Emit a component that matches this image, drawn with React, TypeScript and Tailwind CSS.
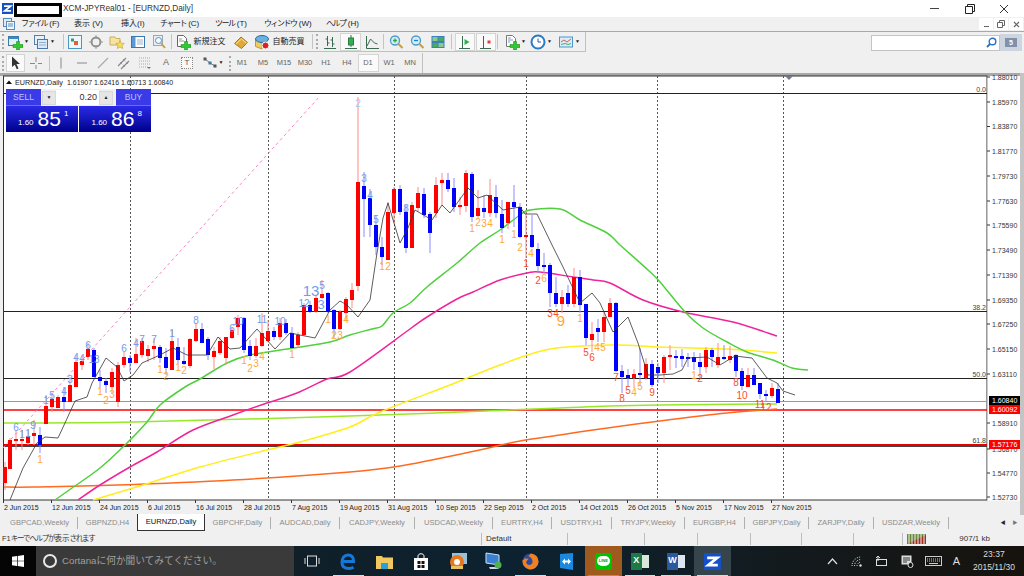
import React from 'react';

// [x, bodyTop, bodyBottom, wickTop, wickBottom, color]
type Candle = [number, number, number, number, number, 'r' | 'b'];

const candles: Candle[] = [
  [5, 467, 483, 462, 490, 'r'], [10, 440, 469, 438, 469, 'r'], [16, 439, 441, 430, 450, 'r'], [22, 439, 441, 430, 450, 'r'],
  [28, 436, 443, 430, 445, 'r'], [34, 433, 436, 420, 445, 'r'], [40, 435, 445, 427, 453, 'b'], [46, 406, 424, 395, 424, 'r'],
  [52, 399, 407, 393, 412, 'r'], [58, 397, 408, 395, 408, 'r'], [64, 397, 402, 387, 412, 'b'], [70, 385, 402, 377, 402, 'r'],
  [76, 362, 387, 355, 387, 'r'], [82, 361, 365, 355, 370, 'r'], [88, 349, 357, 343, 360, 'r'], [94, 350, 377, 348, 377, 'b'],
  [100, 377, 381, 370, 387, 'b'], [106, 381, 385, 378, 393, 'b'], [112, 372, 387, 368, 393, 'r'], [118, 365, 402, 362, 407, 'r'],
  [124, 357, 365, 352, 368, 'r'], [130, 358, 363, 355, 372, 'b'], [136, 354, 363, 338, 363, 'r'], [142, 341, 355, 338, 358, 'r'],
  [148, 349, 356, 345, 362, 'r'], [154, 346, 349, 338, 360, 'r'], [160, 347, 358, 345, 363, 'b'], [166, 357, 368, 348, 375, 'b'],
  [172, 341, 370, 330, 370, 'r'], [178, 347, 360, 338, 363, 'b'], [184, 361, 364, 347, 365, 'b'], [190, 339, 366, 338, 368, 'r'],
  [196, 329, 341, 323, 342, 'r'], [202, 329, 343, 323, 343, 'b'], [208, 339, 355, 337, 360, 'b'], [214, 351, 357, 347, 369, 'r'],
  [220, 341, 353, 337, 355, 'r'], [226, 337, 358, 337, 365, 'r'], [232, 330, 338, 327, 339, 'r'], [238, 318, 327, 315, 335, 'r'],
  [244, 318, 350, 317, 353, 'b'], [250, 346, 356, 340, 360, 'b'], [256, 346, 356, 338, 358, 'r'], [262, 333, 346, 313, 347, 'r'],
  [268, 331, 341, 320, 342, 'r'], [274, 331, 337, 327, 340, 'b'], [280, 323, 337, 318, 340, 'r'], [286, 323, 333, 319, 335, 'b'],
  [292, 333, 348, 327, 348, 'b'], [298, 335, 345, 332, 347, 'r'], [304, 305, 335, 303, 336, 'r'], [310, 305, 312, 301, 313, 'b'],
  [316, 298, 312, 295, 313, 'r'], [322, 294, 298, 280, 299, 'r'], [328, 293, 312, 292, 313, 'b'], [334, 310, 329, 309, 338, 'b'],
  [340, 312, 329, 310, 330, 'r'], [346, 299, 313, 297, 320, 'r'], [352, 290, 300, 283, 308, 'r'], [358, 182, 286, 97, 291, 'r'],
  [364, 186, 199, 172, 237, 'b'], [370, 198, 225, 189, 237, 'b'], [376, 225, 247, 215, 255, 'b'], [382, 247, 257, 237, 265, 'b'],
  [388, 212, 260, 202, 260, 'r'], [394, 189, 213, 187, 223, 'r'], [400, 189, 212, 185, 215, 'b'], [406, 212, 248, 205, 253, 'b'],
  [412, 205, 248, 202, 248, 'r'], [418, 193, 208, 187, 212, 'r'], [424, 194, 215, 188, 218, 'b'], [430, 214, 233, 212, 253, 'b'],
  [436, 185, 213, 177, 218, 'r'], [442, 180, 183, 173, 205, 'r'], [448, 180, 189, 173, 192, 'b'], [454, 188, 207, 178, 212, 'b'],
  [460, 205, 207, 197, 215, 'r'], [466, 173, 206, 170, 212, 'r'], [472, 174, 217, 172, 222, 'b'], [478, 208, 216, 190, 218, 'r'],
  [484, 208, 212, 195, 218, 'b'], [490, 195, 213, 179, 217, 'r'], [496, 197, 213, 185, 218, 'b'], [502, 214, 228, 200, 233, 'b'],
  [508, 202, 223, 202, 229, 'r'], [514, 202, 207, 185, 227, 'b'], [520, 207, 237, 203, 238, 'b'], [526, 235, 237, 212, 258, 'r'],
  [532, 235, 247, 215, 248, 'b'], [538, 249, 266, 243, 273, 'b'], [544, 265, 266, 253, 273, 'b'], [550, 265, 293, 263, 307, 'b'],
  [556, 293, 304, 277, 307, 'b'], [562, 297, 304, 290, 313, 'r'], [568, 293, 304, 285, 307, 'b'], [574, 277, 304, 268, 307, 'r'],
  [580, 277, 305, 270, 313, 'b'], [586, 304, 338, 304, 345, 'b'], [592, 334, 340, 322, 352, 'r'], [598, 328, 332, 319, 342, 'b'],
  [604, 317, 332, 312, 342, 'r'], [610, 303, 317, 298, 317, 'r'], [616, 303, 371, 302, 372, 'b'], [622, 371, 377, 365, 393, 'b'],
  [628, 375, 378, 369, 387, 'b'], [634, 374, 378, 369, 388, 'r'], [640, 373, 375, 348, 385, 'b'], [646, 364, 378, 358, 380, 'r'],
  [652, 364, 385, 360, 387, 'b'], [658, 367, 373, 363, 383, 'b'], [664, 357, 373, 355, 383, 'r'], [670, 355, 357, 345, 370, 'r'],
  [676, 356, 357, 350, 368, 'b'], [682, 356, 359, 349, 367, 'b'], [688, 357, 359, 353, 367, 'b'], [694, 357, 362, 352, 370, 'b'],
  [700, 362, 367, 353, 378, 'b'], [706, 350, 367, 347, 373, 'r'], [712, 350, 357, 348, 367, 'b'], [718, 357, 365, 343, 368, 'r'],
  [724, 357, 359, 345, 360, 'b'], [730, 356, 360, 346, 363, 'r'], [736, 355, 371, 354, 377, 'b'], [742, 371, 386, 368, 390, 'b'],
  [748, 375, 387, 368, 387, 'r'], [754, 375, 385, 368, 385, 'b'], [760, 383, 394, 383, 399, 'b'], [766, 394, 396, 390, 402, 'b'],
  [772, 388, 396, 383, 398, 'r'], [778, 389, 403, 383, 403, 'b'],
];

const blackMa = '10,500 23,468 37,443 45,437 58,438 65,423 75,401 87,397 92,383 106,358 117,367 124,381 133,375 142,363 160,355 173,348 187,355 207,355 218,337 230,349 240,348 257,329 275,349 290,333 315,338 330,310 340,301 347,305 358,317 370,300 377,253 383,218 388,203 400,243 408,228 415,210 432,220 442,205 450,213 468,188 478,198 487,195 503,210 520,207 525,214 537,214 553,247 563,267 580,303 592,293 600,303 613,332 628,317 638,343 648,375 660,375 673,374 682,370 688,358 707,357 720,365 735,356 752,358 767,378 777,383 783,391 795,395';
const greenMa = '55,500 72,488 100,468 127,443 147,422 160,405 185,387 200,379 227,363 250,355 293,348 330,342 350,335 372,329 382,326 393,313 410,303 427,287 457,263 480,243 500,230 520,215 530,210 560,209 580,220 607,233 620,245 648,270 660,282 685,312 703,328 727,342 747,352 773,360 792,368 808,370';
const magentaMa = '78,500 100,485 130,467 157,452 193,430 233,415 267,403 297,393 327,379 350,372 410,329 427,317 457,299 473,292 500,280 527,273 540,272 573,277 593,280 610,283 643,300 683,312 733,322 777,336';
const yellowMa = '93,500 143,485 200,467 267,450 300,442 350,427 380,412 450,385 500,365 550,349 613,345 660,347 727,349 777,353';
const limeMa = '4,423 133,422 350,416 560,408 610,406 660,405 760,404 777,404';
const orangeMa = '4,487 33,487 117,485 233,480 350,472 400,466 470,452 520,441 560,435 593,430 660,421 727,413 777,409';

// round the moving averages off a little, they are read from the chart at sparse points
const smooth = (points: string) => {
  const p = points.split(' ').map((s) => s.split(',').map(Number));
  let d = `M${p[0][0]} ${p[0][1]}`;
  for (let i = 0; i < p.length - 1; i++) {
    const a = p[Math.max(i - 1, 0)];
    const b = p[i];
    const c = p[i + 1];
    const e = p[Math.min(i + 2, p.length - 1)];
    d += `C${b[0] + (c[0] - a[0]) / 6} ${b[1] + (c[1] - a[1]) / 6} ${c[0] - (e[0] - b[0]) / 6} ${c[1] - (e[1] - b[1]) / 6} ${c[0]} ${c[1]}`;
  }
  return d;
};

const vGrid = [130, 268, 394, 526, 657, 783];

const prices: [string, number][] = [
  ['1.88010', 77], ['1.85970', 102], ['1.83870', 126.5], ['1.81770', 151], ['1.79730', 176], ['1.77630', 201], ['1.75590', 225],
  ['1.73490', 250], ['1.71390', 275], ['1.69350', 300], ['1.67250', 324], ['1.65150', 349], ['1.63110', 374], ['1.58910', 423],
  ['1.56870', 449], ['1.54770', 473], ['1.52730', 497],
];

const dates: [string, number][] = [
  ['2 Jun 2015', 3], ['12 Jun 2015', 51], ['24 Jun 2015', 99], ['6 Jul 2015', 147], ['16 Jul 2015', 195], ['28 Jul 2015', 243],
  ['7 Aug 2015', 291], ['19 Aug 2015', 339], ['31 Aug 2015', 387], ['10 Sep 2015', 435], ['22 Sep 2015', 483], ['2 Oct 2015', 531],
  ['14 Oct 2015', 579], ['26 Oct 2015', 627], ['5 Nov 2015', 675], ['17 Nov 2015', 723], ['27 Nov 2015', 771],
];

// [text, x, baseline y, size]
type Label = [string, number, number, number?];

const orangeLabels: Label[] = [
  ['1', 40, 463], ['1', 100, 395], ['2', 106, 404], ['3', 112, 398], ['1', 160, 373], ['2', 166, 380], ['1', 178, 371], ['2', 184, 374],
  ['1', 244, 364], ['2', 250, 372], ['3', 256, 367], ['4', 262, 360], ['1', 292, 358], ['1', 328, 323], ['2', 334, 339], ['3', 340, 339],
  ['4', 346, 323], ['1', 382, 270], ['2', 388, 270], ['1', 472, 232], ['2', 478, 226], ['3', 484, 227], ['4', 490, 227], ['1', 502, 243],
  ['1', 514, 238], ['2', 520, 251], ['4', 531, 257], ['6', 544, 282], ['9', 561, 326, 15], ['1', 580, 322], ['4', 597, 351], ['5', 603, 351],
  ['4', 634, 396], ['5', 640, 390], ['1', 694, 379],
];
const redLabels: Label[] = [
  ['1', 526, 267], ['2', 538, 284], ['3', 550, 317], ['4', 556, 317], ['5', 586, 356], ['6', 592, 361], ['7', 616, 381], ['8', 622, 402],
  ['5', 628, 394], ['9', 652, 396], ['2', 700, 382], ['8', 736, 386], ['10', 742, 399], ['11', 760, 408], ['12', 766, 411],
];
const blueLabels: Label[] = [
  ['6', 16, 431], ['1', 22, 438], ['1', 28, 437], ['9', 33, 429, 11], ['1', 46, 404], ['5', 52, 399], ['4', 64, 395], ['3', 70, 383],
  ['4', 76, 361], ['4', 82, 362], ['6', 88, 349], ['13', 94, 363], ['6', 124, 352], ['4', 136, 347], ['7', 142, 343], ['7', 154, 343],
  ['1', 172, 337], ['8', 196, 324], ['6', 232, 332], ['10', 238, 325], ['11', 262, 323], ['10', 280, 325], ['12', 304, 307], ['13', 311, 296, 15],
  ['3', 321, 309, 13], ['5', 322, 289], ['3', 364, 182], ['4', 370, 199], ['5', 376, 223], ['8', 406, 212],
];

const Chart = () => (
  <svg viewBox="0 73 1024 442" className="block h-[442px] w-[1024px]">
    <rect x="0" y="73" width="1024" height="442" fill="#f0f0f0" />
    <rect x="0" y="73" width="1024" height="3" fill="#a8a8a8" />
    <rect x="3.5" y="76" width="983.5" height="424" fill="#fff" stroke="#333" />
    <rect x="987.5" y="76" width="32.5" height="424.5" fill="#fff" />
    <rect x="1020" y="73" width="4" height="442" fill="#c4c4c4" />

    {vGrid.map((x) => (
      <line key={x} x1={x + 0.5} x2={x + 0.5} y1="76" y2="500" stroke="#555" strokeDasharray="2 2" />
    ))}
    <polygon points="785,76 793,76 789,80" fill="#707a88" />

    <line x1="4" x2="987" y1="93.5" y2="93.5" stroke="#222" />
    <line x1="4" x2="987" y1="311.5" y2="311.5" stroke="#222" />
    <line x1="4" x2="987" y1="378.5" y2="378.5" stroke="#222" />
    <line x1="4" x2="987" y1="401.5" y2="401.5" stroke="#999" />
    <line x1="4" x2="987" y1="410" y2="410" stroke="#f00" strokeWidth="1.5" />
    <line x1="4" x2="987" y1="446.5" y2="446.5" stroke="#444" />
    <line x1="4" x2="987" y1="445" y2="445" stroke="#e80000" strokeWidth="2" />

    <line x1="3" y1="448" x2="320" y2="96" stroke="#ff7fcf" strokeDasharray="3 3" />

    <path d={smooth(orangeMa)} fill="none" stroke="#ff6a20" strokeWidth="1.5" />
    <path d={smooth(limeMa)} fill="none" stroke="#98e82a" strokeWidth="1.5" />
    <path d={smooth(yellowMa)} fill="none" stroke="#ffee1a" strokeWidth="1.5" />
    <path d={smooth(magentaMa)} fill="none" stroke="#f0249a" strokeWidth="1.5" />
    <path d={smooth(greenMa)} fill="none" stroke="#4fd03c" strokeWidth="1.5" />

    {candles.map(([x, top, bottom, high, low, c]) => (
      <g key={x}>
        <rect x={x - 0.5} y={high} width="1" height={low - high} fill={c === 'r' ? '#ff8c8c' : '#8c8cff'} />
        <rect x={x - 2} y={top} width="4" height={Math.max(bottom - top, 2)} fill={c === 'r' ? '#f00' : '#00f'} />
      </g>
    ))}
    <polyline points={blackMa} fill="none" stroke="#333" strokeWidth="0.8" />

    {orangeLabels.map(([t, x, y, s], i) => (
      <text key={i} x={x} y={y} textAnchor="middle" fontSize={s ?? 10} fill="#ffa832">{t}</text>
    ))}
    {redLabels.map(([t, x, y, s], i) => (
      <text key={i} x={x} y={y} textAnchor="middle" fontSize={s ?? 10} fill="#f5502a">{t}</text>
    ))}
    {blueLabels.map(([t, x, y, s], i) => (
      <text key={i} x={x} y={y} textAnchor="middle" fontSize={s ?? 10} fill="#6f9cec">{t}</text>
    ))}
    <text x="358" y="107" textAnchor="middle" fontSize="10" fill="#a8cdf5">2</text>

    <polygon points="6,84 12,84 9,80.5" fill="#111" />
    <text x="15" y="85" fontSize="7.2" fill="#222">EURNZD,Daily</text>
    <text x="67" y="85" fontSize="6.95" fill="#222">1.61907 1.62416 1.60713 1.60840</text>

    <text x="986" y="91.5" textAnchor="end" fontSize="7" fill="#444">0.0</text>
    <text x="986" y="309.5" textAnchor="end" fontSize="7" fill="#444">38.2</text>
    <text x="986" y="376.5" textAnchor="end" fontSize="7" fill="#444">50.0</text>
    <text x="986" y="443" textAnchor="end" fontSize="7" fill="#444">61.8</text>

    {prices.map(([t, y]) => (
      <g key={t}>
        <line x1="987" x2="990" y1={y} y2={y} stroke="#333" />
        <text x="992" y={y + 2.5} fontSize="7" fill="#333">{t}</text>
      </g>
    ))}
    <rect x="989" y="396" width="31" height="9" fill="#000" />
    <text x="992" y="403" fontSize="7" fill="#fff">1.60840</text>
    <rect x="989" y="405" width="31" height="9" fill="#f00" />
    <text x="992" y="412" fontSize="7" fill="#fff">1.60092</text>
    <rect x="989" y="440" width="31" height="9" fill="#f00" />
    <text x="992" y="447" fontSize="7" fill="#fff">1.57176</text>

    {dates.map(([t, x]) => (
      <g key={t}>
        <line x1={x + 0.5} x2={x + 0.5} y1="500" y2="503" stroke="#333" />
        <text x={x + 1} y="510" fontSize="7" fill="#222">{t}</text>
      </g>
    ))}
  </svg>
);

const TradePanel = () => (
  <div className="absolute left-[6px] top-[89px] flex h-[43px] w-[145px] flex-col">
    <div className="flex h-[17px]">
      <div className="flex w-[35px] items-center justify-center border-b border-[#6a6af0] bg-[#3a3ae6] text-[8.5px] text-[#b8c8ff]">SELL</div>
      <div className="flex w-[75px] items-center bg-[#f0f0f0] px-px">
        <span className="flex h-[14px] w-[14px] items-center justify-center border border-[#d8d8d8] bg-[#e6e6e6] text-[5px] text-[#222]">▼</span>
        <span className="h-[15px] w-[43px] bg-white pr-[2px] text-right text-[9px] leading-[15px] text-[#333]">0.20</span>
        <span className="flex h-[14px] w-[14px] items-center justify-center border border-[#d8d8d8] bg-[#e6e6e6] text-[5px] text-[#222]">▲</span>
      </div>
      <div className="flex w-[35px] items-center justify-center border-b border-[#6a6af0] bg-[#3a3ae6] text-[8.5px] text-[#b8c8ff]">BUY</div>
    </div>
    <div className="flex h-[26px] gap-px">
      <div className="flex flex-1 items-end bg-gradient-to-b from-[#2a2ae8] to-[#00008c] pb-[1px] pl-[12px] text-white">
        <span className="mb-[2px] mr-[4px] text-[8px]">1.60</span>
        <span className="text-[21px] leading-[24px]">85</span>
        <span className="mb-[13px] ml-[3px] text-[8px] leading-[9px]">1</span>
      </div>
      <div className="flex flex-1 items-end bg-gradient-to-b from-[#2a2ae8] to-[#00008c] pb-[1px] pl-[13px] text-white">
        <span className="mb-[2px] mr-[4px] text-[8px]">1.60</span>
        <span className="text-[21px] leading-[24px]">86</span>
        <span className="mb-[13px] ml-[3px] text-[8px] leading-[9px]">8</span>
      </div>
    </div>
  </div>
);

const Logo = ({ size }: { size: number }) => (
  <svg width={size} height={size} viewBox="0 0 16 16" className="shrink-0">
    <rect width="16" height="16" fill="#1450c8" />
    <path d="M3 4.5h9.5L4 11.5h9" fill="none" stroke="#fff" strokeWidth="2.6" />
  </svg>
);

const Ico = ({ children, w = 16 }: { children: React.ReactNode; w?: number }) => (
  <svg width={w} height="16" viewBox="0 0 16 16" className="shrink-0">{children}</svg>
);

const Plus = () => <path d="M9.5 7.5h3v3H16v3h-3.5V16h-3v-2.5H6v-3h3.500z" fill="#2ecb2e" stroke="#0f7f0f" strokeWidth="0.5" />;
const Caret = () => <span className="ml-[1px] text-[5px] text-[#222]">▼</span>;

const Cell = ({ w, on, children }: { w: number; on?: boolean; children?: React.ReactNode }) => (
  <div
    className={on ? 'flex h-[18px] shrink-0 items-center justify-center border border-[#d4d4d4] bg-[#fafafa]' : 'flex h-[18px] shrink-0 items-center justify-center'}
    style={{ width: w }}
  >
    {children}
  </div>
);

const Grip = () => <div className="mx-px h-[15px] w-[2px] shrink-0 border-l-2 border-dotted border-[#aaa]" />;
const Sep = ({ l = 2, r = 2 }: { l?: number; r?: number }) => (
  <div className="h-[15px] w-px shrink-0 bg-[#c4c4c4]" style={{ marginLeft: l, marginRight: r }} />
);

const ChartTypeIcon = ({ kind }: { kind: 'bar' | 'candle' | 'line' }) => (
  <Ico>
    {kind === 'bar' && <path d="M5.5 2v10M3.5 5h2M5.5 9h2M10.5 3v10M8.5 6h2M10.5 10h2M2 14.5h12" stroke="#3a6a50" fill="none" />}
    {kind === 'candle' && (
      <>
        <path d="M8 1v12M2 14.5h12" stroke="#3a6a50" />
        <rect x="5.5" y="4" width="5" height="7" fill="#34b050" stroke="#2a7a4a" />
      </>
    )}
    {kind === 'line' && <path d="M2.5 2v12.5H15M3 12l3.5-7 4 4 3 1" stroke="#3a6a50" fill="none" />}
  </Ico>
);

const Toolbar1 = () => (
  <div className="flex h-[20px] w-[586px] items-center border-r border-b border-[#c0c0c0] pl-px">
    <Grip />
    <Cell w={26}>
      <Ico>
        <rect x="1.5" y="2.5" width="10" height="9" fill="#e2f1fb" stroke="#3a7aaa" />
        <rect x="2" y="3" width="9" height="2" fill="#3a8ac8" />
        <Plus />
      </Ico>
      <Caret />
    </Cell>
    <Cell w={26}>
      <Ico>
        <rect x="1.5" y="1.5" width="10" height="9" fill="#e8f0fa" stroke="#5a80a8" />
        <rect x="4.5" y="5.5" width="10" height="9" fill="#dce9f6" stroke="#4a78a8" />
        <path d="M6 8.5h7M6 11h7" stroke="#8ab0d4" />
      </Ico>
      <Caret />
    </Cell>
    <Sep l={6} r={0} />
    <Cell w={21}>
      <Ico>
        <rect x="1.5" y="1.5" width="13" height="13" fill="#eef7fc" stroke="#4a98c0" />
        <path d="M4 4.5h3v3H4z" fill="#30a060" />
        <path d="M7 7h4v4H7z" fill="#e06040" />
      </Ico>
    </Cell>
    <Cell w={21}>
      <Ico>
        <circle cx="8" cy="8" r="4.5" fill="none" stroke="#8a8a8a" strokeWidth="1.8" />
        <path d="M8 1v4M8 11v4M1 8h4M11 8h4" stroke="#a09a90" />
      </Ico>
    </Cell>
    <Cell w={21}>
      <Ico>
        <path d="M1 3h5l1 1.5h4V11H1z" fill="#f7e3a0" stroke="#c8ae60" />
        <path d="M11 6.5l1.3 2.7 3 .3-2.2 2 .6 3-2.7-1.5-2.7 1.5.6-3-2.2-2 3-.3z" fill="#f5dc60" stroke="#c0a030" strokeWidth="0.6" />
      </Ico>
    </Cell>
    <Cell w={21}>
      <Ico>
        <rect x="1.5" y="2.5" width="13" height="11" fill="#fff" stroke="#3a78b0" />
        <rect x="2" y="3" width="3.5" height="10" fill="#5a9ad4" />
        <path d="M7 6h6M7 8h6M7 10h6" stroke="#9ab4cc" />
      </Ico>
    </Cell>
    <Cell w={21}>
      <Ico>
        <rect x="2.5" y="1.5" width="9" height="10" fill="#e8eef4" stroke="#9aa8b6" />
        <circle cx="7.5" cy="6.5" r="3" fill="#f4fafe" stroke="#5a90c0" />
        <path d="M10 9l4 5" stroke="#c8a050" strokeWidth="2" />
      </Ico>
    </Cell>
    <Sep l={2} r={2.5} />
    <div className="flex h-[18px] w-[55.5px] shrink-0 items-center">
      <Ico>
        <path d="M2.5 1.5h6l3 3v8h-9z" fill="#fff" stroke="#666" />
        <path d="M4 5h3M4 7h5" stroke="#999" />
        <Plus />
      </Ico>
      <span className="ml-[3px] whitespace-nowrap text-[8px] text-[#222]">新規注文</span>
    </div>
    <Cell w={21}>
      <Ico>
        <path d="M1.5 9.5L8 3l6.5 5.5-6 6z" fill="#e0a838" stroke="#a07c28" />
        <path d="M3 10l5.5-5 5 4" fill="none" stroke="#f8e2a8" />
      </Ico>
    </Cell>
    <div className="flex h-[18px] w-[55.5px] shrink-0 items-center pl-[2.5px]">
      <Ico>
        <path d="M1.5 6v6.5L8 15V6z" fill="#f0cc60" stroke="#b89a40" />
        <ellipse cx="8" cy="5" rx="6.5" ry="3.5" fill="#6cb0e0" stroke="#2a6a98" />
        <circle cx="11.5" cy="11.5" r="3.5" fill="#e02020" stroke="#fff" />
      </Ico>
      <span className="ml-[3px] whitespace-nowrap text-[8px] text-[#222]">自動売買</span>
    </div>
    <Sep l={5} r={2} />
    <Grip />
    <div className="w-[0.5px] shrink-0" />
    <Cell w={21}><ChartTypeIcon kind="bar" /></Cell>
    <Cell w={21} on><ChartTypeIcon kind="candle" /></Cell>
    <Cell w={21}><ChartTypeIcon kind="line" /></Cell>
    <Sep l={1} r={1} />
    <Cell w={21}>
      <Ico>
        <circle cx="7" cy="6.5" r="4.5" fill="#d4ecfa" stroke="#4a9ac8" strokeWidth="1.3" />
        <path d="M7 4.5v4M5 6.5h4" stroke="#30a850" strokeWidth="1.3" />
        <path d="M10.5 10l4 4" stroke="#c8a040" strokeWidth="2.2" />
      </Ico>
    </Cell>
    <Cell w={21}>
      <Ico>
        <circle cx="7" cy="6.5" r="4.5" fill="#d4ecfa" stroke="#4a9ac8" strokeWidth="1.3" />
        <path d="M5 6.5h4" stroke="#2a78c8" strokeWidth="1.3" />
        <path d="M10.5 10l4 4" stroke="#c8a040" strokeWidth="2.2" />
      </Ico>
    </Cell>
    <Cell w={21}>
      <Ico>
        <rect x="1.5" y="2" width="13" height="12" fill="#3a80c0" />
        <rect x="2.5" y="3" width="5" height="4" fill="#8acb8a" />
        <rect x="8.5" y="3" width="5" height="4" fill="#4aa860" />
        <rect x="2.5" y="9" width="5" height="4" fill="#4aa860" />
        <rect x="8.5" y="9" width="5" height="4" fill="#8acb8a" />
      </Ico>
    </Cell>
    <Sep l={3} r={2.5} />
    <Cell w={20} on>
      <Ico>
        <path d="M5.5 2v12M2 14.5h11" stroke="#3a6a50" fill="none" />
        <path d="M7.5 5l5 3-5 3z" fill="#2cb050" />
      </Ico>
    </Cell>
    <div className="w-px shrink-0" />
    <Cell w={20} on>
      <Ico>
        <path d="M5.5 2v12M2 14.5h11" stroke="#3a6a50" fill="none" />
        <path d="M9.5 6.5h3v3h-3z" fill="#e04030" />
      </Ico>
    </Cell>
    <Sep l={1.5} r={4} />
    <Cell w={26}>
      <Ico>
        <path d="M2.5 1.5h6l3 3v8h-9z" fill="#fff" stroke="#777" />
        <path d="M4 4h3M4 6h5M4 8h2" stroke="#7aa0c0" />
        <Plus />
      </Ico>
      <Caret />
    </Cell>
    <Cell w={26}>
      <Ico>
        <circle cx="8" cy="8" r="6.5" fill="#fff" stroke="#2a7ac8" strokeWidth="2" />
        <path d="M8 4.5V8h3" stroke="#2a5a90" fill="none" />
      </Ico>
      <Caret />
    </Cell>
    <Cell w={30}>
      <Ico>
        <rect x="1.5" y="3" width="13" height="10" fill="#d8ecfa" stroke="#4a98c8" />
        <path d="M3 8l3-2 3 2 4-3" stroke="#d86040" fill="none" />
        <path d="M3 10.5l4-1 3 1 3-1" stroke="#50b060" fill="none" />
      </Ico>
      <Caret />
    </Cell>
  </div>
);

const Tf = ({ t, on }: { t: string; on?: boolean }) => (
  <div className={on ? 'flex h-[18px] w-[21px] shrink-0 items-center justify-center border border-[#d4d4d4] bg-[#fafafa] text-[7.5px] text-[#666]' : 'flex h-[18px] w-[21px] shrink-0 items-center justify-center text-[7.5px] text-[#666]'}>
    {t}
  </div>
);

const Toolbar2 = () => (
  <div className="flex h-[20px] w-[423px] items-center border-r border-[#c0c0c0] pl-px">
    <Grip />
    <div className="w-px shrink-0" />
    <Cell w={19} on>
      <Ico><path d="M4 1.5l8 7.5H8.5l2 4.5-1.7.8-2-4.5L4 12z" fill="#333" /></Ico>
    </Cell>
    <div className="w-[0.5px] shrink-0" />
    <Cell w={21}>
      <Ico><path d="M8 2v5M8 10v4M2 8.5h5M10 8.5h4" stroke="#888" /></Ico>
    </Cell>
    <Sep l={2} r={1} />
    <Cell w={21}><Ico><path d="M8 2.5v11" stroke="#999" strokeWidth="1.2" /></Ico></Cell>
    <Cell w={21}><Ico><path d="M3 8h10" stroke="#999" strokeWidth="1.2" /></Ico></Cell>
    <Cell w={21}><Ico><path d="M3 13L13 3" stroke="#aaa" strokeWidth="1.2" /></Ico></Cell>
    <Cell w={21}>
      <Ico>
        <path d="M2 11L10 3M5 14l8-8" stroke="#888" strokeWidth="1.2" />
        <path d="M4 7l5 5M7 4l5 5" stroke="#888" strokeDasharray="1 1" />
      </Ico>
    </Cell>
    <Cell w={21}>
      <Ico>
        <path d="M2 3h12M2 6h12M2 9h12M2 12h9" stroke="#aaa" strokeDasharray="1 1" />
        <path d="M10 12h4l-2 2z" fill="#777" />
      </Ico>
    </Cell>
    <Cell w={21}><span className="text-[9px] text-[#666]">A</span></Cell>
    <Cell w={21}>
      <div className="flex h-[12px] w-[12px] items-center justify-center border border-dotted border-[#888] bg-[#f8f8f8] text-[8px] text-[#555]">T</div>
    </Cell>
    <Cell w={30}>
      <Ico>
        <path d="M3 4l5 4 5 3" stroke="#777" fill="none" />
        <rect x="1.5" y="2.5" width="3" height="3" fill="#555" />
        <rect x="6.5" y="6.5" width="3" height="3" fill="#3a7a9a" />
        <rect x="11.5" y="9.5" width="3" height="3" fill="#555" />
      </Ico>
      <Caret />
    </Cell>
    <Grip />
    <Tf t="M1" />
    <Tf t="M5" />
    <Tf t="M15" />
    <Tf t="M30" />
    <Tf t="H1" />
    <Tf t="H4" />
    <Tf t="D1" on />
    <Tf t="W1" />
    <Tf t="MN" />
  </div>
);

const tabs: [string, number][] = [
  ['GBPCAD,Weekly', 76], ['GBPNZD,H4', 59], ['EURNZD,Daily', 68], ['GBPCHF,Daily', 66], ['AUDCAD,Daily', 69], ['CADJPY,Weekly', 75],
  ['USDCAD,Weekly', 78], ['EURTRY,H4', 59], ['USDTRY,H1', 60], ['TRYJPY,Weekly', 73], ['EURGBP,H4', 60], ['GBPJPY,Daily', 64],
  ['ZARJPY,Daily', 65], ['USDZAR,Weekly', 75],
];

const Tabs = () => (
  <div className="flex h-[16px] items-stretch bg-[#f0f0f0] pl-[2px]">
    {tabs.map(([t, w], i) =>
      i === 2 ? (
        <div key={t} className="-mt-px flex items-center justify-center border-x border-b border-[#333] bg-white text-[7.6px] text-[#111]" style={{ width: w }}>
          {t}
        </div>
      ) : (
        <div key={t} className={i === 1 ? 'flex items-center justify-center text-[7.6px] text-[#8c8c8c]' : 'my-[2px] flex items-center justify-center border-r border-[#b0b0b0] text-[7.6px] text-[#8c8c8c]'} style={{ width: w }}>
          {t}
        </div>
      ),
    )}
    <div className="ml-auto flex w-[30px] items-center justify-center gap-[7px] text-[5px] text-[#222]">
      <span>◀</span>
      <span className="text-[#777]">▶</span>
    </div>
  </div>
);

const statusCells = [86, 77, 53, 53, 51, 52, 49];

const StatusBar = () => (
  <div className="flex h-[15px] items-center bg-[#f0f0f0] text-[8px] text-[#333]">
    <span className="w-[481px] whitespace-nowrap pl-[2px] text-[7.5px]">
      F1<span className="tracking-[-1.2px]">キーでヘルプが</span>表示<span className="tracking-[-1.2px]">されます</span>
    </span>
    {statusCells.map((w, i) => (
      <div key={i} className="h-[12px] shrink-0 border-l border-[#bdbdbd] pl-[4px] leading-[12px]" style={{ width: w }}>
        {i === 0 ? 'Default' : ''}
      </div>
    ))}
    <div className="flex h-[12px] flex-1 items-center justify-between border-l border-[#bdbdbd] pl-[4px] pr-[34px]">
      <svg width="19" height="10" viewBox="0 0 19 10">
        <rect width="19" height="10" fill="#6a8a3a" />
        <path d="M0 10L19 1v9z" fill="#a03020" />
        <path d="M2 0v10M5 0v10M8 0v10M11 0v10M14 0v10M17 0v10" stroke="#f0f0f0" />
      </svg>
      <span>907/1 kb</span>
    </div>
  </div>
);

const TaskIcon = ({ children, running, bg, line }: { children: React.ReactNode; running?: boolean; bg?: string; line?: string }) => (
  <div className={`relative flex h-[30px] w-[36.4px] shrink-0 items-center justify-center ${bg ?? ''}`}>
    {children}
    {running && <div className={`absolute bottom-0 left-[3px] right-[3px] h-[1.5px] ${line ?? 'bg-[#e8d8c0]'}`} />}
  </div>
);

const Taskbar = () => (
  <div className="flex h-[30px] items-stretch bg-gradient-to-r from-[#141a1e] via-[#0c2230] to-[#16130e]">
    <div className="flex w-[36px] items-center justify-center bg-[#050505]">
      <svg width="12" height="12" viewBox="0 0 12 12">
        <path d="M0 1.7L5 1v4.7H0zM5.7.9L12 0v5.7H5.7zM0 6.3h5V11L0 10.3zM5.7 6.3H12V12l-6.3-.9z" fill="#fff" />
      </svg>
    </div>
    <div className="flex w-[258px] items-center bg-[#3a3a3a] pl-[7px]">
      <div className="h-[14px] w-[14px] rounded-full border-2 border-[#e8e8e8]" />
      <span className="ml-[5px] whitespace-nowrap text-[9.7px] text-[#a0a0a0]">Cortanaに何か聞いてみてください。</span>
    </div>
    <TaskIcon>
      <svg width="16" height="12" viewBox="0 0 16 12">
        <rect x="3.5" y="1" width="9" height="10" fill="none" stroke="#ddd" />
        <path d="M1 3v6M15 3v6" stroke="#ddd" />
      </svg>
    </TaskIcon>
    <TaskIcon running>
      <svg width="17" height="17" viewBox="0 0 17 17">
        <path d="M2.5 8.5h11c0-4-2-6.5-5.5-6.5S2 5 2 9.5 5 15.5 9 15.5c2 0 3.5-.5 4.5-1.2" fill="none" stroke="#1478d8" strokeWidth="3" />
      </svg>
    </TaskIcon>
    <TaskIcon>
      <svg width="17" height="15" viewBox="0 0 17 15">
        <path d="M0 2h6l1 1.5h10V15H0z" fill="#f0c860" />
        <rect x="5" y="9" width="7" height="6" fill="#2aa0d8" />
      </svg>
    </TaskIcon>
    <TaskIcon>
      <svg width="16" height="17" viewBox="0 0 16 17">
        <path d="M1 5h14v12H1z" fill="#fff" />
        <path d="M5 5V3c0-3 6-3 6 0v2" fill="none" stroke="#fff" />
        <path d="M4.5 8h3v3h-3zM8.5 8h3v3h-3zM4.5 12h3v3h-3zM8.5 12h3v3h-3z" fill="#111" />
      </svg>
    </TaskIcon>
    <TaskIcon>
      <svg width="18" height="17" viewBox="0 0 18 17">
        <rect x="3" y="0" width="15" height="11" fill="#9ac0d8" />
        <circle cx="8" cy="9" r="7" fill="#e87820" />
        <circle cx="8" cy="9" r="3" fill="#fff" />
        <rect x="2" y="13" width="12" height="3" fill="#e8c060" />
      </svg>
    </TaskIcon>
    <TaskIcon>
      <svg width="18" height="18" viewBox="0 0 18 18">
        <path d="M1 1l13 2v10L1 11z" fill="#3a80d0" stroke="#cfe0f0" />
        <path d="M4 15h8l2 2H5z" fill="#cfd8e0" />
        <circle cx="13" cy="13" r="3.5" fill="#50b050" />
      </svg>
    </TaskIcon>
    <TaskIcon running>
      <svg width="17" height="17" viewBox="0 0 17 17">
        <circle cx="8.5" cy="8.5" r="8" fill="#2a4aa0" />
        <path d="M8.5.5A8 8 0 1 1 .8 6.5c1 1 1.5 0 2-1.5 1 1 3 .5 4 .5-1 2-3 2-2.5 4.5 1 2.5 5 2.5 6 0s-1-6-4-7c1-.8 1.5-1.5 2.2-2z" fill="#f08020" />
      </svg>
    </TaskIcon>
    <TaskIcon>
      <svg width="15" height="17" viewBox="0 0 15 17">
        <path d="M1 1l13-1v17l-13-2z" fill="#1a8ae0" />
        <path d="M3 8.5l3-3v2h3v-2l3 3-3 3v-2H6v2z" fill="#fff" />
      </svg>
    </TaskIcon>
    <TaskIcon running bg="bg-[#a05a1e]" line="bg-[#f07c10]">
      <div className="flex h-[17px] w-[17px] items-center justify-center rounded-[3px] bg-[#00c300]">
        <div className="flex h-[10px] w-[13px] items-center justify-center rounded-full bg-white text-[4px] font-bold text-[#00a000]">LINE</div>
      </div>
    </TaskIcon>
    <TaskIcon running>
      <div className="flex h-[17px] w-[18px] items-center">
        <div className="z-10 flex h-[17px] w-[11px] items-center justify-center bg-[#1e7a45] text-[9px] font-bold text-white">X</div>
        <div className="h-[13px] w-[7px] bg-[#d8e8dc]" />
      </div>
    </TaskIcon>
    <TaskIcon running>
      <div className="flex h-[17px] w-[18px] items-center">
        <div className="z-10 flex h-[17px] w-[11px] items-center justify-center bg-[#2a5a9e] text-[9px] font-bold text-white">W</div>
        <div className="h-[13px] w-[7px] bg-[#dde6f2]" />
      </div>
    </TaskIcon>
    <TaskIcon running bg="bg-[#36444c]">
      <Logo size={17} />
    </TaskIcon>
    <div className="ml-auto flex items-center text-[#e0e0e0]">
      <svg width="11" height="7" viewBox="0 0 11 7" className="mr-[13px]"><path d="M1 6l4.5-5 4.5 5" fill="none" stroke="#ddd" strokeWidth="1.2" /></svg>
      <svg width="11" height="11" viewBox="0 0 11 11" className="mr-[13px]">
        <path d="M1 10c0-5 4-9 9-9M3.5 10c0-3.5 3-6.5 6.5-6.5M6 10c0-2 2-4 4-4" fill="none" stroke="#ccc" strokeDasharray="1 1" />
        <circle cx="9.5" cy="9.5" r="1.2" fill="#ddd" />
      </svg>
      <svg width="13" height="11" viewBox="0 0 13 11" className="mr-[13px]">
        <rect x="1.5" y="3.5" width="10" height="6" fill="none" stroke="#ddd" />
        <path d="M3 0v5M1 2l2-2 2 2" fill="none" stroke="#ddd" />
      </svg>
      <svg width="13" height="13" viewBox="0 0 13 13" className="mr-[11px]">
        <rect x="0.5" y="0.5" width="10" height="9" fill="#ddd" />
        <path d="M2 3h7M2 5h7M2 7h4" stroke="#333" />
        <circle cx="9.5" cy="10" r="2.5" fill="#111" stroke="#ddd" />
      </svg>
      <svg width="17" height="10" viewBox="0 0 17 10" className="mr-[11px]">
        <rect x="0.5" y="0.5" width="16" height="9" fill="none" stroke="#ccc" />
        <path d="M2 3h13M2 5h13" stroke="#ccc" strokeDasharray="1 1" />
        <path d="M4 7.5h9" stroke="#ccc" />
      </svg>
      <span className="mr-[11px] text-[11px] text-[#ddd]">A</span>
      <div className="mr-[7px] flex w-[46px] flex-col items-center text-[8.5px] leading-[13px] text-[#ddd]">
        <span>23:37</span>
        <span>2015/11/30</span>
      </div>
    </div>
  </div>
);

const MenuItem = ({ w, kana, tail }: { w: number; kana: string; tail: string }) => (
  <span className="whitespace-nowrap" style={{ width: w }}>
    <span className="tracking-[-1.5px]">{kana}</span> {tail}
  </span>
);

export default function App() {
  return (
    <div className="relative flex h-[576px] w-[1024px] flex-col overflow-hidden bg-white font-['Liberation_Sans','Noto_Sans_CJK_JP',sans-serif]">
      <div className="flex h-[17px] items-center bg-white pl-[2px]">
        <Logo size={11} />
        <div className="ml-px mt-[2px] h-[14px] w-[48px] border-[3px] border-black bg-white" />
        <span className="ml-px whitespace-nowrap text-[8.3px] text-[#333]">XCM-JPYReal01 - [EURNZD,Daily]</span>
        <div className="ml-auto flex items-center">
          <div className="mr-[26px] h-px w-[9px] bg-[#444]" />
          <svg width="10" height="10" viewBox="0 0 10 10" className="mr-[24px]">
            <path d="M0.5 2.5h7v7h-7zM2.5 2.5v-2h7v7h-2" fill="none" stroke="#222" />
          </svg>
          <svg width="10" height="10" viewBox="0 0 10 10" className="mr-[15px]">
            <path d="M1 1l8 8M9 1L1 9" stroke="#333" />
          </svg>
        </div>
      </div>

      <div className="flex h-[15px] items-center border-b border-[#a8a8a8] bg-[#f0f0f0] pl-[3px] text-[8px] text-[#222]">
        <svg width="12" height="12" viewBox="0 0 12 12" className="shrink-0">
          <rect x="0.5" y="0.5" width="8" height="8" fill="#dfeaf6" stroke="#5a8ab8" />
          <rect x="3.5" y="3.5" width="8" height="8" fill="#eef5fb" stroke="#5a8ab8" />
          <path d="M5 6h5M5 8h5" stroke="#5a8ab8" />
        </svg>
        <div className="w-[6px] shrink-0" />
        <MenuItem w={53} kana="ファイル" tail="(F)" />
        <span className="w-[47px] whitespace-nowrap">表示 (V)</span>
        <span className="w-[39px] whitespace-nowrap">挿入(I)</span>
        <MenuItem w={55} kana="チャート" tail="(C)" />
        <MenuItem w={49} kana="ツール" tail="(T)" />
        <MenuItem w={62} kana="ウィンドウ" tail="(W)" />
        <MenuItem w={40} kana="ヘルプ" tail="(H)" />
        <div className="ml-auto flex h-[12px] items-center gap-px pr-[1px] text-[#555]">
          <div className="flex h-[12px] w-[14px] items-end justify-center bg-white pb-[3px]"><div className="h-px w-[5px] bg-[#666]" /></div>
          <div className="flex h-[12px] w-[14px] items-center justify-center bg-white">
            <svg width="8" height="8" viewBox="0 0 8 8"><path d="M0.5 2.5h5v5h-5zM2.5 2.5v-2h5v5h-2" fill="none" stroke="#666" /></svg>
          </div>
          <div className="flex h-[12px] w-[14px] items-center justify-center bg-white">
            <svg width="7" height="7" viewBox="0 0 7 7"><path d="M1 1l5 5M6 1L1 6" stroke="#666" strokeWidth="1.2" /></svg>
          </div>
        </div>
      </div>

      <div className="flex h-[21px] bg-[#f0f0f0]">
        <Toolbar1 />
        <div className="ml-auto mt-[2px] flex h-[17px] items-center pr-[2px]">
          <div className="flex h-[16px] w-[129px] items-center justify-end border border-[#c4c4c4] bg-white pr-[2px]">
            <svg width="11" height="11" viewBox="0 0 11 11">
              <circle cx="6.5" cy="4.5" r="3.3" fill="none" stroke="#2a70c8" strokeWidth="1.4" />
              <path d="M4 7L1 10" stroke="#2a70c8" strokeWidth="1.8" />
            </svg>
          </div>
          <div className="flex h-[17px] w-[22px] items-center justify-center bg-[#cdd6e0]">
            <div className="flex h-[9px] w-[12px] items-center justify-center bg-[#7e92ac] text-[7px] font-bold leading-none text-white">5</div>
          </div>
        </div>
      </div>

      <div className="h-[20px] bg-[#f0f0f0]">
        <Toolbar2 />
      </div>

      <Chart />
      <TradePanel />
      <Tabs />
      <StatusBar />
      <Taskbar />
    </div>
  );
}
